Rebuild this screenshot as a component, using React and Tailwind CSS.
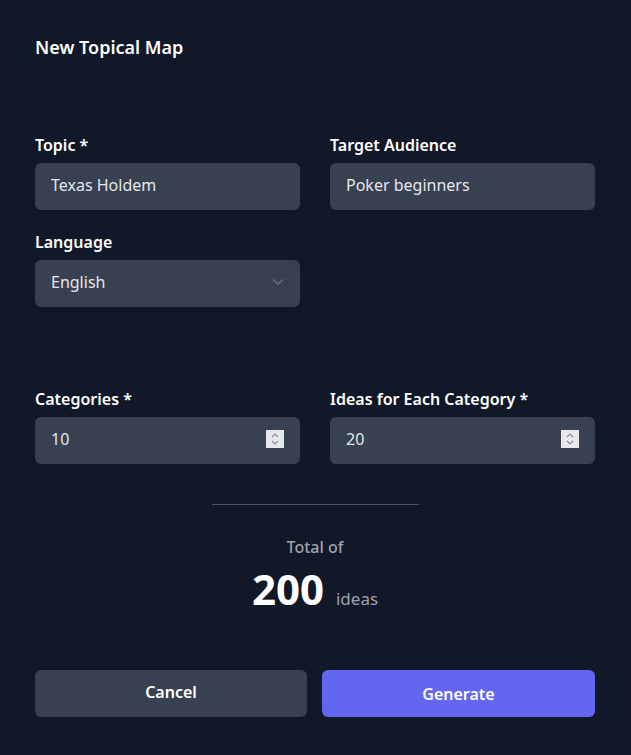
import React, { useState } from "react";

function Spinner() {
  return (
    <div className="w-[18px] h-[18px] bg-[#e8e8ec] flex flex-col items-center justify-center">
      <svg width="10" height="14" viewBox="0 0 10 14" fill="none" stroke="#8b8b93" strokeWidth="1.2">
        <path d="M2 5 L5 2 L8 5" />
        <path d="M2 9 L5 12 L8 9" />
      </svg>
    </div>
  );
}

function Field({ label, children }) {
  return (
    <div className="flex flex-col">
      <label className="text-[16px] leading-6 font-semibold text-white mb-[6px]">{label}</label>
      {children}
    </div>
  );
}

export default function App() {
  const [topic, setTopic] = useState("Texas Holdem");
  const [audience, setAudience] = useState("Poker beginners");
  const [cats, setCats] = useState("10");
  const [ideas, setIdeas] = useState("20");

  const total = (parseInt(cats) || 0) * (parseInt(ideas) || 0);
  const inputCls =
    "w-full h-[47px] rounded-md bg-[#374151] text-[#e5e7eb] px-4 pb-[3px] text-[16px] outline-none";

  return (
    <div
      className="min-h-screen bg-[#111827] pl-[35px] pr-[36px] pt-[33px] pb-[38px]"
      style={{ fontFamily: '"Noto Sans", "Open Sans", sans-serif' }}
    >
      <h2 className="text-[18px] leading-7 font-semibold text-white">New Topical Map</h2>

      <div className="grid grid-cols-2 gap-x-[30px] gap-y-5 mt-[72px]">
        <Field label="Topic *">
          <input className={inputCls} value={topic} onChange={(e) => setTopic(e.target.value)} />
        </Field>
        <Field label="Target Audience">
          <input className={inputCls} value={audience} onChange={(e) => setAudience(e.target.value)} />
        </Field>
        <Field label="Language">
          <div className={inputCls + " flex items-center justify-between"}>
            <span>English</span>
            <svg width="12" height="8" viewBox="0 0 12 8" fill="none" stroke="#6b7280" strokeWidth="1.5">
              <path d="M1 1.5 L6 6 L11 1.5" />
            </svg>
          </div>
        </Field>
      </div>

      <div className="grid grid-cols-2 gap-x-[30px] mt-[80px]">
        <Field label="Categories *">
          <div className={inputCls + " flex items-center justify-between"}>
            <span>{cats}</span>
            <Spinner />
          </div>
        </Field>
        <Field label="Ideas for Each Category *">
          <div className={inputCls + " flex items-center justify-between"}>
            <span>{ideas}</span>
            <Spinner />
          </div>
        </Field>
      </div>

      <div className="flex justify-center mt-[40px]">
        <div className="w-[207px] h-px bg-[#4b5563]" />
      </div>

      <div className="flex flex-col items-center mt-[30px]">
        <p className="text-[16px] leading-6 font-medium text-[#9ca3af]">Total of</p>
        <p className="mt-[6px] flex items-baseline gap-3">
          <span className="text-[42px] leading-[48px] font-bold text-white">{total}</span>
          <span className="text-[17px] text-[#9ca3af]">ideas</span>
        </p>
      </div>

      <div className="flex gap-[15px] mt-[57px]">
        <button className="w-[272px] h-[47px] rounded-md bg-[#374151] text-white font-semibold text-[16px] pb-[3px]">
          Cancel
        </button>
        <button className="flex-1 h-[47px] rounded-md bg-[#6366f1] text-white font-semibold text-[16px]">
          Generate
        </button>
      </div>
    </div>
  );
}
